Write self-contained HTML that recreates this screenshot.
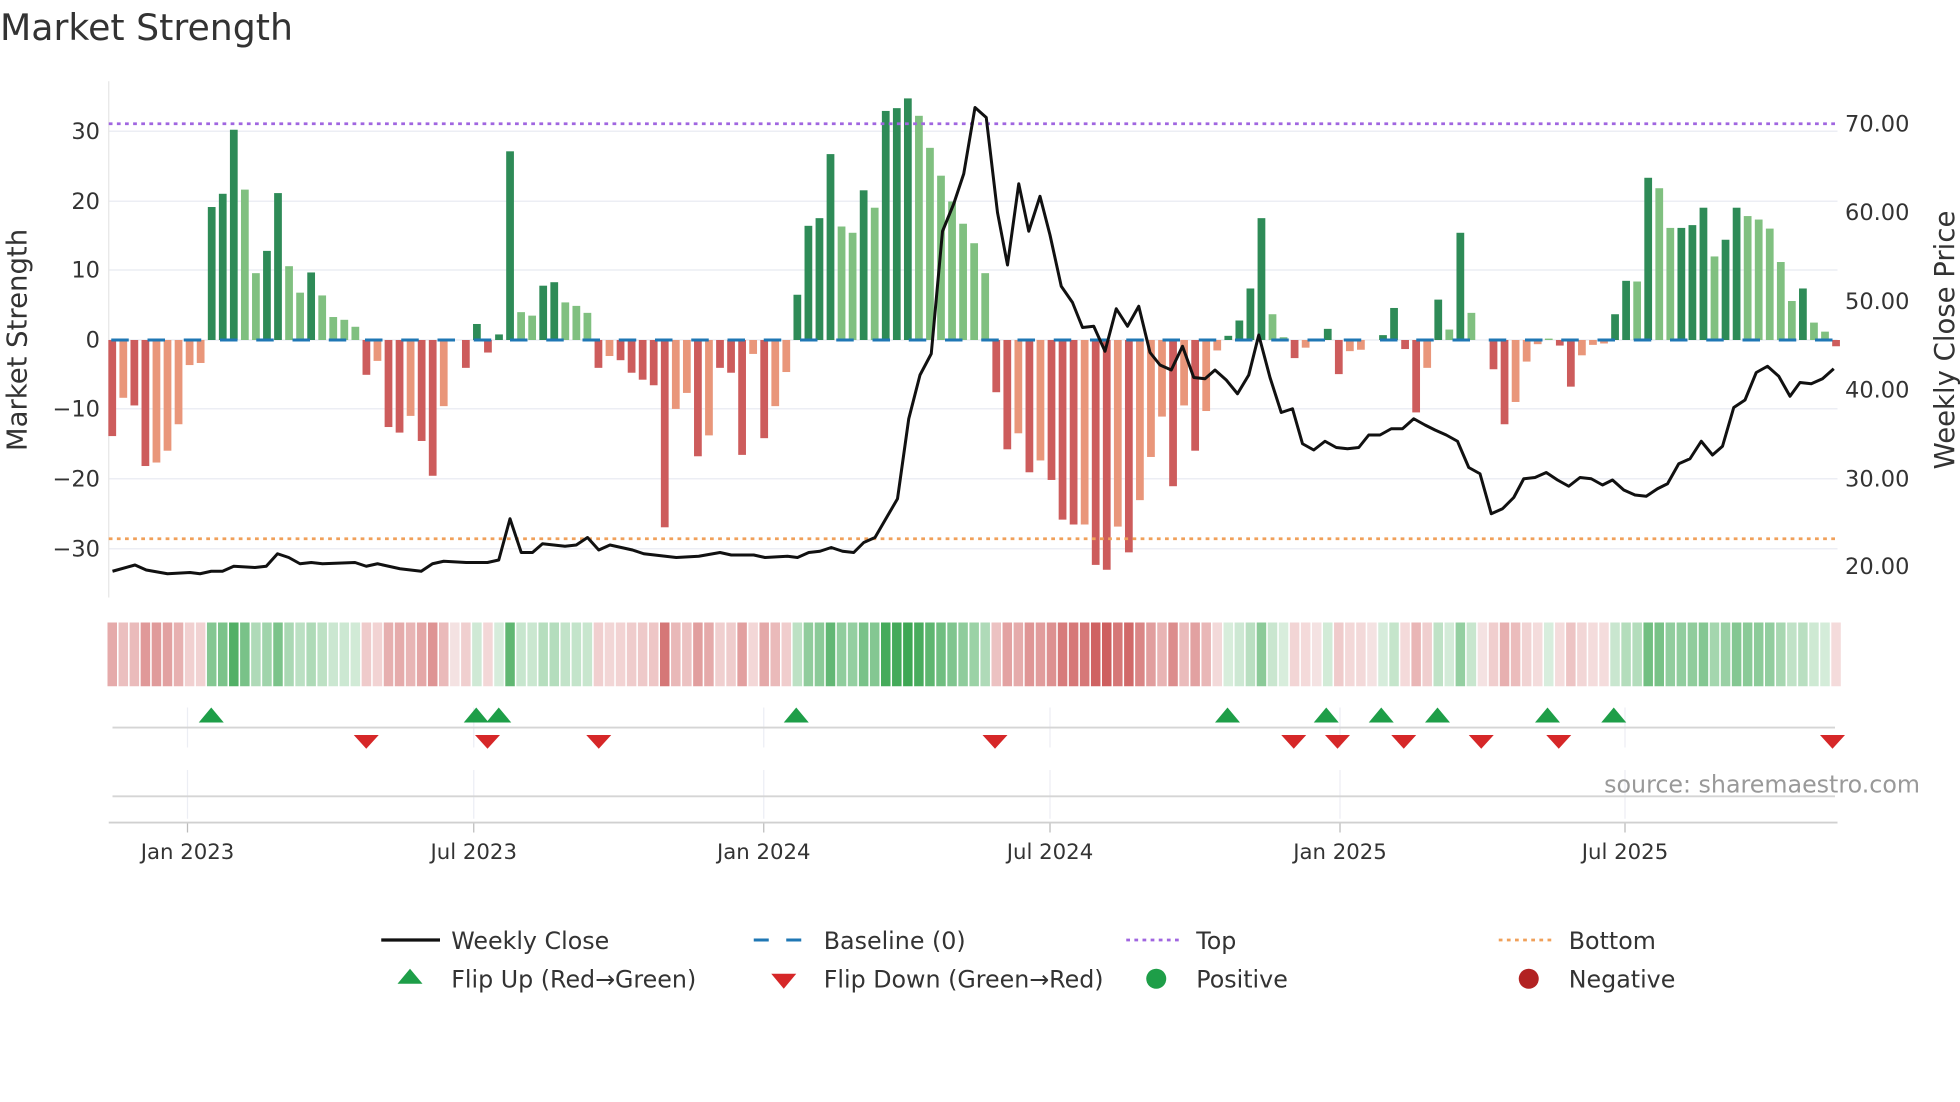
<!DOCTYPE html>
<html><head><meta charset="utf-8"><style>
html,body{margin:0;padding:0;background:#fff;width:1960px;height:1102px;overflow:hidden}
svg{display:block}
text{font-family:"DejaVu Sans","Liberation Sans",sans-serif}
</style></head><body>
<svg id="s" width="1960" height="1102" viewBox="0 0 1568 881.6" xmlns="http://www.w3.org/2000/svg">
<text x="0" y="32" font-size="29" fill="#333">Market Strength</text>
<g id="grid"></g>
<g id="bars"></g>
<line x1="87" y1="99" x2="1470" y2="99" stroke="#a066e0" stroke-width="2.2" stroke-dasharray="3 3.5"/>
<line x1="87" y1="431" x2="1470" y2="431" stroke="#f0a05a" stroke-width="2.2" stroke-dasharray="3 3.5"/>
<line x1="89" y1="272" x2="1470" y2="272" stroke="#1f77b4" stroke-width="2.4" stroke-dasharray="14 15"/>
<polyline id="price" fill="none" stroke="#111" stroke-width="2.4" stroke-linejoin="round"/>
<g id="strip"></g>
<g id="flips"></g>
<g font-size="17" fill="#333" text-anchor="middle" style="font-family:'DejaVu Sans',sans-serif">
<text x="150" y="687">Jan 2023</text><text x="379" y="687">Jul 2023</text><text x="611" y="687">Jan 2024</text>
<text x="840" y="687">Jul 2024</text><text x="1072" y="687">Jan 2025</text><text x="1300" y="687">Jul 2025</text>
</g>
<text x="1536" y="634" font-size="19" fill="#999" text-anchor="end">source: sharemaestro.com</text>
<text transform="translate(21,272) rotate(-90)" font-size="22" fill="#333" text-anchor="middle">Market Strength</text>
<text transform="translate(1563,272) rotate(-90)" font-size="22" fill="#333" text-anchor="middle">Weekly Close Price</text>
<g font-size="19" fill="#333">
<line x1="305" y1="752" x2="352" y2="752" stroke="#111" stroke-width="2.6"/>
<text x="361" y="759">Weekly Close</text>
<line x1="603" y1="752" x2="647" y2="752" stroke="#1f77b4" stroke-width="2.4" stroke-dasharray="12 14"/>
<text x="659" y="759">Baseline (0)</text>
<line x1="901" y1="752" x2="945" y2="752" stroke="#a066e0" stroke-width="2.2" stroke-dasharray="3 3.5"/>
<text x="957" y="759">Top</text>
<line x1="1199" y1="752" x2="1243" y2="752" stroke="#f0a05a" stroke-width="2.2" stroke-dasharray="3 3.5"/>
<text x="1255" y="759">Bottom</text>
<polygon points="328,775 338,787 318,787" fill="#1e9e48"/>
<text x="361" y="790">Flip Up (Red→Green)</text>
<polygon points="617,779 637,779 627,791" fill="#d62728"/>
<text x="659" y="790">Flip Down (Green→Red)</text>
<circle cx="925" cy="783" r="8" fill="#1e9e48"/>
<text x="957" y="790">Positive</text>
<circle cx="1223" cy="783" r="8" fill="#b22222"/>
<text x="1255" y="790">Negative</text>
</g>
</svg>
<script>
var NS="http://www.w3.org/2000/svg";
function el(p,t,a){var e=document.createElementNS(NS,t);for(var k in a)e.setAttribute(k,a[k]);document.getElementById(p).appendChild(e);return e;}
var raw="-13.8R,-8.3r,-9.4R,-18.1R,-17.6r,-15.9r,-12.1r,-3.6r,-3.3r,19.1G,21G,30.2G,21.6g,9.6g,12.8G,21.1G,10.6g,6.8g,9.7G,6.4g,3.3g,2.9g,1.9g,-5R,-3r,-12.5R,-13.3R,-10.9r,-14.5R,-19.5R,-9.5r,0Z,-4R,2.3G,-1.8R,0.8G,27.1G,4g,3.5g,7.8G,8.3G,5.4g,4.9g,3.9g,-4R,-2.3r,-2.9R,-4.7R,-5.7R,-6.5R,-26.9R,-9.9r,-7.6r,-16.7R,-13.7r,-4R,-4.7R,-16.5R,-2r,-14.1R,-9.5r,-4.6r,6.5G,16.4G,17.5G,26.7G,16.3g,15.4g,21.5G,19g,32.9G,33.3G,34.7G,32.2g,27.6g,23.6g,19.9g,"+
"16.7g,13.9g,9.6g,-7.5R,-15.7R,-13.4r,-19R,-17.3r,-20.1R,-25.8R,-26.5R,-26.5r,-32.3R,-33R,-26.8r,-30.5R,-23r,-16.8r,-11r,-21R,-9.4r,-15.9R,-10.2r,-1.5r,0.6G,2.8G,7.4G,17.5G,3.7g,0.4g,-2.6R,-1.1r,0Z,1.6G,-4.9R,-1.6r,-1.4r,0Z,0.7G,4.6G,-1.3R,-10.4R,-4r,5.8G,1.5g,15.4G,3.9g,0Z,-4.2R,-12.1R,-8.9r,-3.1r,-0.6r,0.2g,-0.8R,-6.7R,-2.2r,-0.7r,-0.5r,3.7G,8.5G,8.4g,23.3G,21.8g,16.1g,16.1G,16.5G,19G,12g,14.4G,19G,17.8g,17.3g,16g,11.2g,5.6g,7.4G,2.5g,1.2g,-0.9R";
var d=raw.split(",");
var col={G:"#2e8b57",g:"#80c080",R:"#cd5c5c",r:"#e9967a",Z:"#ccc"};
var gy=[[105,"30"],[161,"20"],[216,"10"],[272,"0"],[327,"−10"],[383,"−20"],[439,"−30"]];
gy.forEach(function(g){el("grid","line",{x1:87,x2:1470,y1:g[0],y2:g[0],stroke:"#eceef4","stroke-width":1.2});
var t=el("grid","text",{x:80,y:g[0]+6,"font-size":18,fill:"#333","text-anchor":"end"});t.textContent=g[1];});
var ry=[[99,"70.00"],[170,"60.00"],[241,"50.00"],[312,"40.00"],[383,"30.00"],[453,"20.00"]];
ry.forEach(function(g){var t=el("grid","text",{x:1476,y:g[0]+6,"font-size":18,fill:"#333"});t.textContent=g[1];});
el("grid","line",{x1:87,x2:87,y1:65,y2:478,stroke:"#e6e6e6","stroke-width":1});
[150,379,611,840,1072,1300].forEach(function(x){
el("grid","line",{x1:x,x2:x,y1:566,y2:598,stroke:"#eceef4","stroke-width":1});
el("grid","line",{x1:x,x2:x,y1:616,y2:655,stroke:"#eceef4","stroke-width":1});
el("grid","line",{x1:x,x2:x,y1:658,y2:666,stroke:"#bbb","stroke-width":1});});
el("grid","line",{x1:90,x2:1468,y1:582,y2:582,stroke:"#d5d5d5","stroke-width":1.5});
el("grid","line",{x1:90,x2:1468,y1:637,y2:637,stroke:"#d5d5d5","stroke-width":1.5});
el("grid","line",{x1:87,x2:1470,y1:658,y2:658,stroke:"#d0d0d0","stroke-width":1.5});
d.forEach(function(s,i){var v=parseFloat(s),c=s.slice(-1),x=89.8+i*8.84;
var h=Math.abs(v)*5.57,y=v>=0?272-h:272;
if(h>0)el("bars","rect",{x:x-3.1,y:y,width:6.2,height:h,fill:col[c]});
var a=0.18+0.75*Math.min(Math.abs(v),35)/35;
var f=v>0?"rgba(46,160,70,"+a+")":(v<0?"rgba(200,75,75,"+a+")":"rgba(220,160,160,0.3)");
el("strip","rect",{x:x-3.8,y:498,width:7.6,height:51,fill:f});});
var p="90,457 108,452 117,456 134,459 152,458 160,459 169,457 178,457 187,453 204,454 213,453 222,443 231,446 240,451 249,450 258,451 284,450 293,453 302,451 320,455 337,457 346,451 355,449 373,450 390,450 399,448 408,415 417,442 426,442 434,435 452,437 461,436 470,430 479,440 488,436 506,440 515,443 541,446 559,445 576,442 585,444 603,444 612,446 630,445 638,446 647,442 656,441 665,438 674,441 683,442 691,434 700,430 718,399 727,335 736,300 745,283 754,185 763,163 771,139 780,86 789,94 798,170 806,212 815,147 823,185 832,157 840,188 849,229 858,242 866,262 875,261 884,281 893,247 902,261 911,245 920,282 928,292 937,296 946,277 955,302 964,303 972,296 981,304 990,315 999,300 1007,268 1016,302 1025,330 1034,327 1042,355 1051,360 1060,353 1069,358 1078,359 1087,358 1095,348 1104,348 1113,343 1122,343 1131,335 1140,340 1148,344 1157,348 1166,353 1175,374 1184,379 1193,411 1202,407 1211,398 1219,383 1228,382 1237,378 1246,384 1255,389 1264,382 1273,383 1282,388 1290,384 1299,392 1308,396 1317,397 1326,391 1334,387 1343,371 1352,367 1361,353 1370,364 1378,357 1387,326 1396,320 1405,298 1414,293 1423,301 1432,317 1440,306 1449,307 1458,303 1467,295";
document.getElementById("price").setAttribute("points",p);
[169,381,399,637,982,1061,1105,1150,1238,1291].forEach(function(x){el("flips","polygon",{points:(x)+",566 "+(x+10)+",578 "+(x-10)+",578",fill:"#1e9e48"});});
[293,390,479,796,1035,1070,1123,1185,1247,1466].forEach(function(x){el("flips","polygon",{points:(x-10)+",588 "+(x+10)+",588 "+x+",599",fill:"#d62728"});});
</script>
</body></html>
